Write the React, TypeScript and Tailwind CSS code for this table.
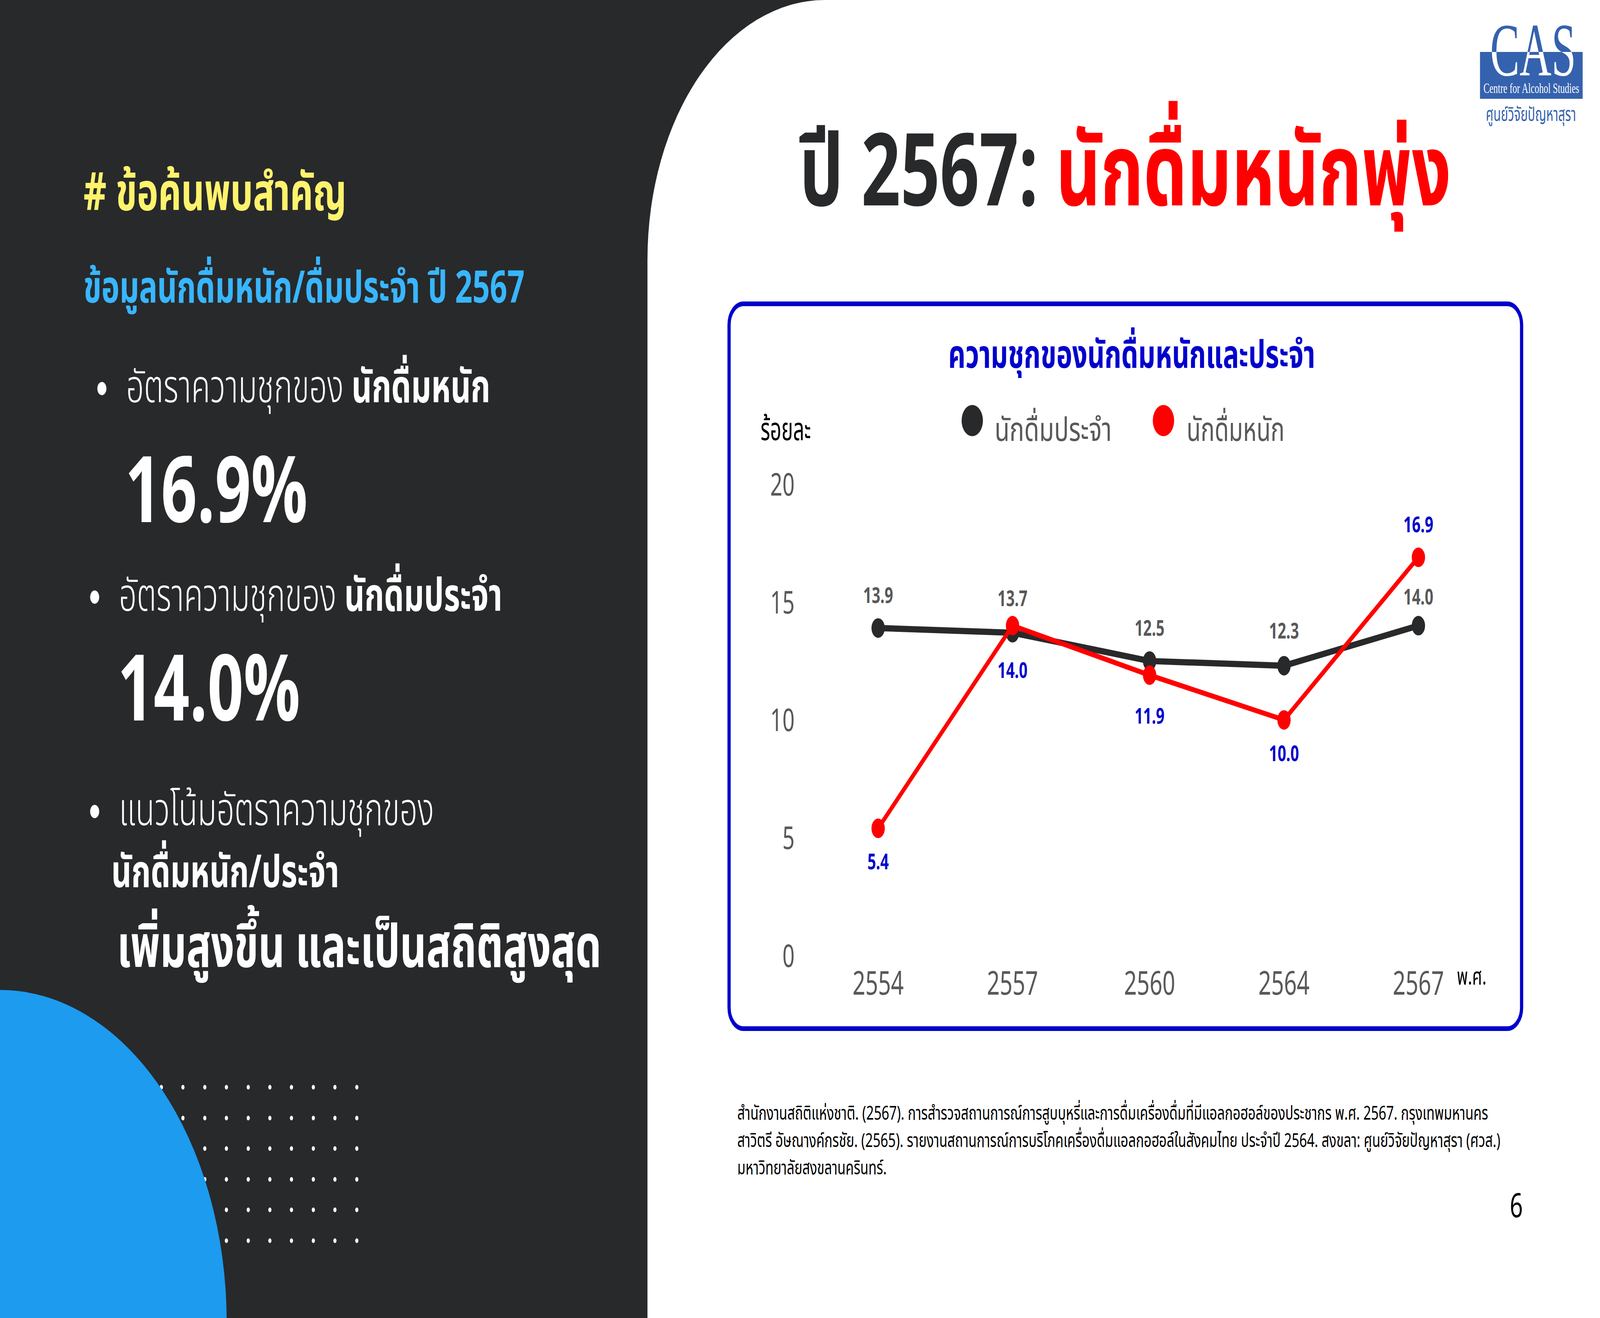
const TH = "font-['Noto_Sans_Thai','Noto_Sans','Liberation_Sans',sans-serif]";

const years = ["2554", "2557", "2560", "2564", "2567"];
const xs = [3293, 3797, 4311, 4815, 5319];
const yOf = (v: number) => 2447 - v * 60.35;
const regular = [13.9, 13.7, 12.5, 12.3, 14.0];
const heavy = [5.4, 14.0, 11.9, 10.0, 16.9];
const regularLabelY = [1544, 1552, 1628, 1635, 1548];
const heavyLabelY = [2226, 1736, 1853, 1949, 1363];
const ticks = [20, 15, 10, 5, 0];

const pts = (vals: number[]) => vals.map((v, i) => `${xs[i]},${yOf(v)}`).join(" ");

function Logo() {
  return (
    <svg
      className={`absolute right-[40px] top-0 ${TH}`}
      width={420}
      height={340}
      viewBox="5540 0 420 340"
    >
      <defs>
        {/* letters are blue above the band and white where they sit on it */}
        <linearGradient id="casFill" gradientUnits="userSpaceOnUse" x1={0} y1={40} x2={0} y2={340}>
          <stop offset="0" stopColor="#3562ae" />
          <stop offset="0.31" stopColor="#3562ae" />
          <stop offset="0.31" stopColor="#ffffff" />
          <stop offset="1" stopColor="#ffffff" />
        </linearGradient>
      </defs>
      <rect x={5550} y={133} width={385} height={120} fill="#3562ae" />
      <text
        x={5588}
        y={193}
        fontSize={192}
        fill="url(#casFill)"
        textLength={322}
        lengthAdjust="spacingAndGlyphs"
        style={{ fontFamily: "'Liberation Serif', serif" }}
      >
        CAS
      </text>
      <text
        x={5563}
        y={238}
        fontSize={36}
        fill="#ffffff"
        textLength={359}
        lengthAdjust="spacingAndGlyphs"
        style={{ fontFamily: "'Liberation Serif', serif" }}
      >
        Centre for Alcohol Studies
      </text>
      <text x={5572} y={310} fontSize={50} fill="#3562ae" textLength={338} lengthAdjust="spacingAndGlyphs">
        ศูนย์วิจัยปัญหาสุรา
      </text>
    </svg>
  );
}

function Chart() {
  return (
    <svg className={`block ${TH}`} width={2960} height={1638} viewBox="2740 990 2960 1638">
      <text x={2852} y={1127} fontSize={80} fill="#000000" textLength={189} lengthAdjust="spacingAndGlyphs">
        ร้อยละ
      </text>
      <circle cx={3646} cy={1077} r={40} fill="#28292b" />
      <text x={3730} y={1129} fontSize={84} fill="#595959" textLength={439} lengthAdjust="spacingAndGlyphs">
        นักดื่มประจำ
      </text>
      <circle cx={4363} cy={1077} r={40} fill="#ff0000" />
      <text x={4450} y={1129} fontSize={84} fill="#595959" textLength={367} lengthAdjust="spacingAndGlyphs">
        นักดื่มหนัก
      </text>

      {ticks.map((t) => (
        <text key={t} x={2980} y={yOf(t) + 29} fontSize={80} fill="#595959" textAnchor="end">
          {t}
        </text>
      ))}
      {years.map((y, i) => (
        <text key={y} x={xs[i]} y={2547} fontSize={84} fill="#595959" textAnchor="middle">
          {y}
        </text>
      ))}
      <text x={5463} y={2521} fontSize={60} fill="#000000">
        พ.ศ.
      </text>

      <polyline points={pts(regular)} fill="none" stroke="#28292b" strokeWidth={16} strokeLinejoin="round" />
      {regular.map((v, i) => (
        <circle key={`r${i}`} cx={xs[i]} cy={yOf(v)} r={25} fill="#28292b" />
      ))}
      <polyline points={pts(heavy)} fill="none" stroke="#ff0000" strokeWidth={13} strokeLinejoin="round" />
      {heavy.map((v, i) => (
        <circle key={`h${i}`} cx={xs[i]} cy={yOf(v)} r={25} fill="#ff0000" />
      ))}

      {regular.map((v, i) => (
        <text
          key={`rl${i}`}
          x={xs[i]}
          y={regularLabelY[i]}
          fontSize={56}
          fontWeight={700}
          fill="#595959"
          textAnchor="middle"
        >
          {v.toFixed(1)}
        </text>
      ))}
      {heavy.map((v, i) => (
        <text
          key={`hl${i}`}
          x={xs[i]}
          y={heavyLabelY[i]}
          fontSize={56}
          fontWeight={700}
          fill="#0000cc"
          textAnchor="middle"
        >
          {v.toFixed(1)}
        </text>
      ))}
    </svg>
  );
}

function Bullet({ className, children }: { className: string; children: React.ReactNode }) {
  return (
    <div className={`flex items-center h-[117px] ${className}`}>
      <span className="w-[34px] h-[34px] rounded-full bg-white shrink-0" />
      <span className="ml-[74px] text-[117px] leading-none font-light text-white whitespace-nowrap">{children}</span>
    </div>
  );
}

export default function App() {
  // the slide is drawn at 6000x3375 and fitted to whatever window it is shown in
  const sx = window.innerWidth / 6000;
  const sy = window.innerHeight / 3375;

  return (
    <div className="w-screen h-screen overflow-hidden">
      <div
        className={`relative w-[6000px] h-[3375px] overflow-hidden bg-[#28292b] flex origin-top-left ${TH}`}
        style={{ transform: `scale(${sx}, ${sy})` }}
      >
        {/* left: key findings */}
        <div className="relative w-[2428px] h-full shrink-0">
          <div className="absolute left-[599px] top-[2778px] grid grid-cols-[repeat(10,12px)] gap-x-[69.4px] gap-y-[66.6px]">
            {Array.from({ length: 60 }).map((_, i) => (
              <span key={i} className="w-[12px] h-[12px] rounded-full bg-white" />
            ))}
          </div>
          <div className="absolute left-[-850px] top-[2535px] w-[1700px] h-[1700px] rounded-full bg-[#1c9bef]" />

          <div className="relative flex flex-col pt-[430px] whitespace-nowrap">
            <h2 className="ml-[313px] text-[134px] leading-none font-bold text-[#fff36d]"># ข้อค้นพบสำคัญ</h2>
            <p className="ml-[313px] mt-[119px] text-[114px] leading-none font-bold text-[#38b6ff]">
              ข้อมูลนักดื่มหนัก/ดื่มประจำ ปี 2567
            </p>
            <Bullet className="ml-[365px] mt-[139px]">
              อัตราความชุกของ <b className="font-bold">นักดื่มหนัก</b>
            </Bullet>
            <p className="ml-[469px] mt-[94px] text-[236px] leading-none font-bold text-white">16.9%</p>
            <Bullet className="ml-[338px] mt-[87px]">
              อัตราความชุกของ <b className="font-bold">นักดื่มประจำ</b>
            </Bullet>
            <p className="ml-[441px] mt-[68px] text-[236px] leading-none font-bold text-white">14.0%</p>
            <Bullet className="ml-[338px] mt-[128px]">แนวโน้มอัตราความชุกของ</Bullet>
            <p className="ml-[418px] mt-[43px] text-[116px] leading-none font-bold text-white">นักดื่มหนัก/ประจำ</p>
            <p className="ml-[439px] mt-[58px] text-[153px] leading-none font-bold text-white">
              เพิ่มสูงขึ้น และเป็นสถิติสูงสุด
            </p>
          </div>
        </div>

        {/* right: chart panel */}
        <div className="relative flex-1 min-w-0 h-full bg-white rounded-tl-[665px] flex flex-col">
          <Logo />
          <h1 className="pt-[318px] pl-[300px] pr-[288px] text-center text-[258px] leading-none font-bold text-[#28292b] whitespace-nowrap">
            ปี 2567: <span className="text-[#ff0000]">นักดื่มหนักพุ่ง</span>
          </h1>

          <div className="ml-[300px] mt-[196px] w-[2984px] h-[1868px] shrink-0 border-[12px] border-[#0000cc] rounded-[60px] flex flex-col overflow-hidden">
            <div className="h-[206px] shrink-0 pt-[78px] pl-[48px] text-center text-[100px] leading-none font-bold text-[#0000cc] whitespace-nowrap">
              ความชุกของนักดื่มหนักและประจำ
            </div>
            <Chart />
          </div>

          <div className="ml-[337px] mt-[177px] text-[50px] leading-[70px] text-black whitespace-nowrap">
            สำนักงานสถิติแห่งชาติ. (2567). การสำรวจสถานการณ์การสูบบุหรี่และการดื่มเครื่องดื่มที่มีแอลกอฮอล์ของประชากร พ.ศ. 2567. กรุงเทพมหานคร
            <br />
            สาวิตรี อัษณางค์กรชัย. (2565). รายงานสถานการณ์การบริโภคเครื่องดื่มแอลกอฮอล์ในสังคมไทย ประจำปี 2564. สงขลา: ศูนย์วิจัยปัญหาสุรา (ศวส.)
            <br />
            มหาวิทยาลัยสงขลานครินทร์.
          </div>
          <div className="self-end mr-[289px] mt-[21px] text-[86px] leading-none text-black">6</div>
        </div>
      </div>
    </div>
  );
}
